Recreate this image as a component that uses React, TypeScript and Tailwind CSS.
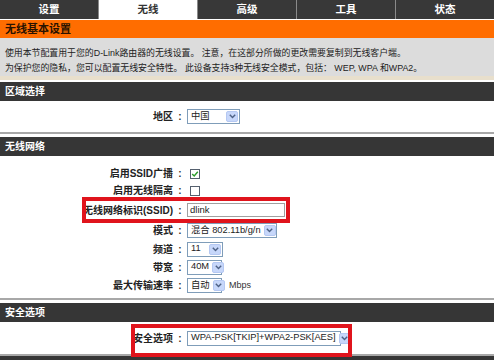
import { ReactNode } from "react"

const tabs = ["设置", "无线", "高级", "工具", "状态"]

function Arrow() {
  return (
    <span className="flex h-[11px] w-[12px] shrink-0 items-center justify-center rounded-[2px] border border-[#b5c8f2] bg-[#c7d7fa]">
      <svg width="7" height="5" viewBox="0 0 7 5">
        <path d="M0.8 0.8 L3.5 3.6 L6.2 0.8" fill="none" stroke="#4d6185" strokeWidth="1.4" />
      </svg>
    </span>
  )
}

function Select({ value, width }: { value: string; width: string }) {
  return (
    <div className={`flex h-[15px] items-center justify-between gap-[3px] border border-[#7f9db9] bg-white pl-[3px] pr-[1px] text-[9.3px] text-[#222] ${width}`}>
      <span className="whitespace-nowrap">{value}</span>
      <Arrow />
    </div>
  )
}

function Row({ label, children, className = "" }: { label: string; children: ReactNode; className?: string }) {
  return (
    <div className={`flex items-center ${className}`}>
      <div className="w-[173px] whitespace-nowrap text-right text-[10px] font-bold text-[#222]">{label}</div>
      <div className="w-[14px] text-center text-[10px] font-bold text-[#333]">:</div>
      <div className="flex items-center gap-[7px]">{children}</div>
    </div>
  )
}

function Header({ title }: { title: string }) {
  return (
    <div className="flex h-[19px] items-center bg-[#363636] pl-[5px] text-[10px] font-bold text-white">{title}</div>
  )
}

function Check({ on }: { on?: boolean }) {
  return (
    <span className="ml-[3px] flex h-[10px] w-[10px] items-center justify-center border border-[#55606e] bg-white">
      {on && (
        <svg width="8" height="8" viewBox="0 0 8 8">
          <path d="M1.2 4 L3.2 6 L6.8 1.8" fill="none" stroke="#2a9c2a" strokeWidth="1.4" />
        </svg>
      )}
    </span>
  )
}

export default function App() {
  return (
    <div className="h-[362px] w-[494px] overflow-hidden bg-white" style={{ fontFamily: '"Liberation Sans", "Noto Sans CJK SC", sans-serif' }}>
      <div className="grid h-[19px] grid-cols-5 gap-[1px] bg-[#8a8a8a]">
        {tabs.map((t) => (
          <div
            key={t}
            className={`flex items-center justify-center text-[10.5px] font-bold ${t === "无线" ? "bg-white text-[#333]" : "bg-[#383838] text-white"}`}
          >
            {t}
          </div>
        ))}
      </div>
      <div className="h-[1px] bg-white" />
      <div className="flex h-[18px] items-center bg-[#ff6d00] pl-[5px] text-[11px] font-bold text-[#2a1300]">无线基本设置</div>
      <div className="flex h-[38px] flex-col gap-[4px] bg-[#dcdcdc] pl-[5px] pt-[10px] text-[8.9px] text-[#222]">
        <div className="leading-[11px]">使用本节配置用于您的D-Link路由器的无线设置。 注意，在这部分所做的更改需要复制到无线客户端。</div>
        <div className="leading-[11px]">为保护您的隐私，您可以配置无线安全特性。 此设备支持3种无线安全模式，包括： WEP, WPA 和WPA2。</div>
      </div>
      <div className="h-[4px] bg-[#e8dfcc]" />
      <div className="h-[2px]" />

      <Header title="区域选择" />
      <div className="flex h-[31px] items-center">
        <Row label="地区">
          <Select value="中国" width="w-[53px]" />
        </Row>
      </div>
      <div className="h-[2px] bg-[#a8a8a8]" />
      <div className="h-[3px]" />

      <Header title="无线网络" />
      <div className="flex h-[142px] flex-col pt-[9px]">
        <Row label="启用SSID广播" className="h-[17px]">
          <Check on />
        </Row>
        <Row label="启用无线隔离" className="h-[17px]">
          <Check />
        </Row>
        <div className="relative">
          <Row label="无线网络标识(SSID)" className="h-[22px]">
            <div className="flex h-[14px] w-[98px] items-center border border-[#a0a0a0] pl-[2px] text-[9.5px] text-[#222]">dlink</div>
          </Row>
          <div className="absolute left-[82px] top-[-2px] h-[26px] w-[208px] border-[4px] border-[#e0141c]" />
        </div>
        <Row label="模式" className="h-[19px]">
          <Select value="混合 802.11b/g/n" width="w-[90px]" />
        </Row>
        <Row label="频道" className="h-[18px]">
          <Select value="11" width="w-[36px]" />
        </Row>
        <Row label="带宽" className="h-[18px]">
          <Select value="40M" width="w-[35px]" />
        </Row>
        <Row label="最大传输速率" className="h-[19px]">
          <Select value="自动" width="w-[35px]" />
          <span className="text-[9px] text-[#333]">Mbps</span>
        </Row>
      </div>
      <div className="h-[2px] bg-[#a8a8a8]" />
      <div className="h-[3px]" />

      <Header title="安全选项" />
      <div className="relative flex h-[32px] items-center">
        <Row label="安全选项">
          <Select value="WPA-PSK[TKIP]+WPA2-PSK[AES]" width="w-[154px]" />
        </Row>
        <div className="absolute left-[131px] top-[2px] h-[33px] w-[221px] border-[4px] border-[#e0141c]" />
      </div>
      <div className="h-[2px] bg-[#a8a8a8]" />
      <div className="h-[4px] bg-[#363636]" />
    </div>
  )
}
